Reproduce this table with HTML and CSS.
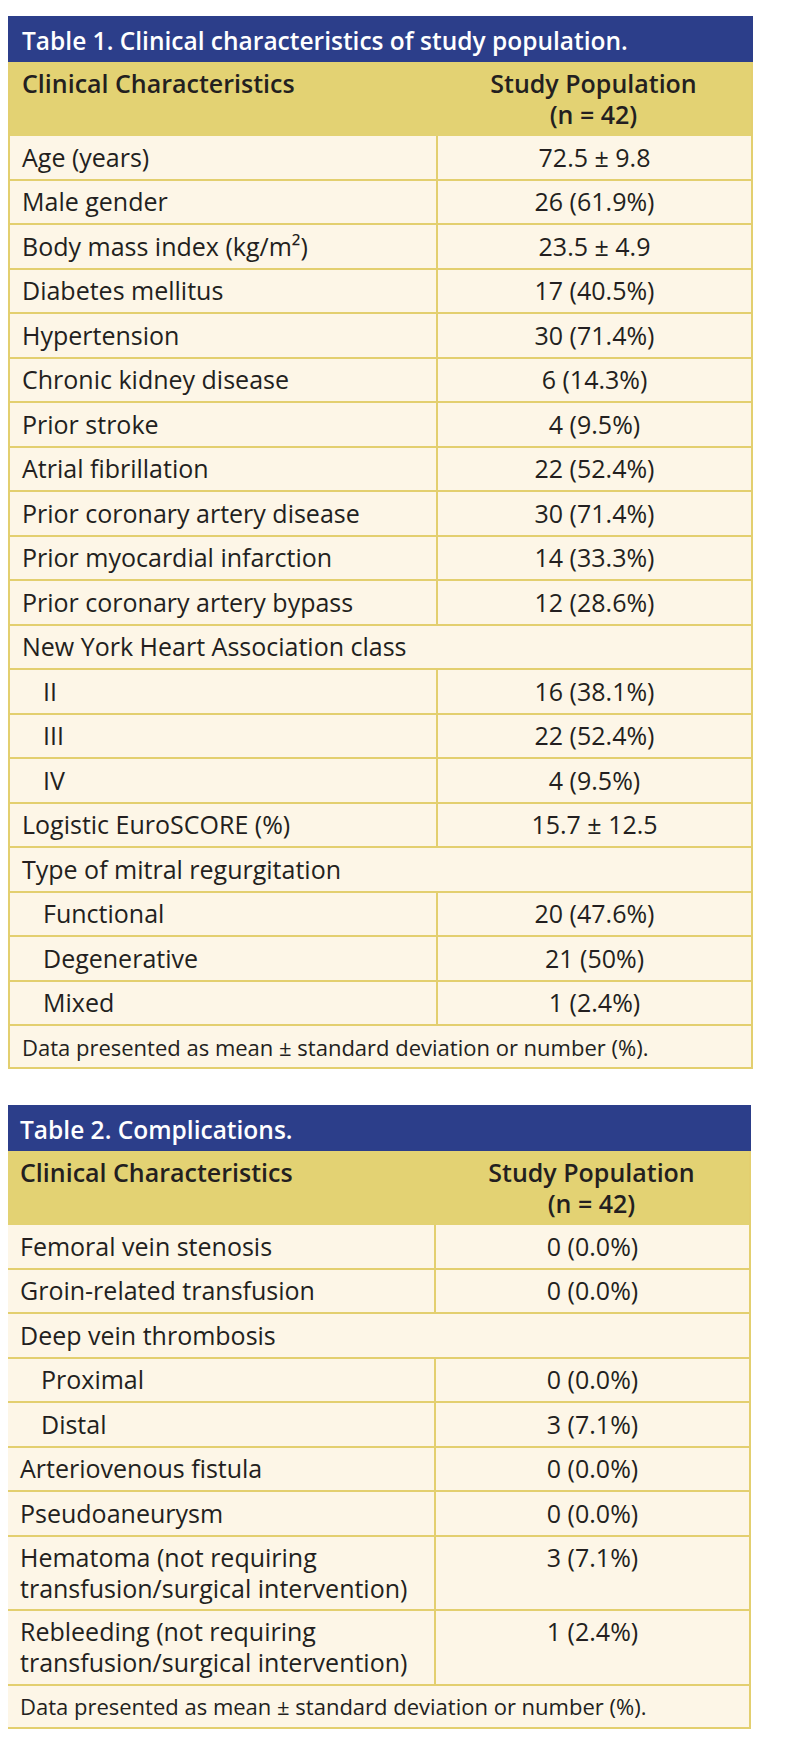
FILE: index.html
```html
<!DOCTYPE html>
<html lang="en">
<head>
<meta charset="utf-8">
<title>Tables</title>
<link rel="stylesheet" href="styles.css">
</head>
<body>
<section class="tbl t1">
  <div class="title">Table 1. Clinical characteristics of study population.</div>
  <div class="body">
    <div class="row head"><div class="c1">Clinical Characteristics</div><div class="c2">Study Population<br>(n = 42)</div></div>
    <div class="row"><div class="c1">Age (years)</div><div class="c2">72.5 ± 9.8</div></div>
    <div class="row"><div class="c1">Male gender</div><div class="c2">26 (61.9%)</div></div>
    <div class="row"><div class="c1">Body mass index (kg/m²)</div><div class="c2">23.5 ± 4.9</div></div>
    <div class="row"><div class="c1">Diabetes mellitus</div><div class="c2">17 (40.5%)</div></div>
    <div class="row"><div class="c1">Hypertension</div><div class="c2">30 (71.4%)</div></div>
    <div class="row"><div class="c1">Chronic kidney disease</div><div class="c2">6 (14.3%)</div></div>
    <div class="row"><div class="c1">Prior stroke</div><div class="c2">4 (9.5%)</div></div>
    <div class="row"><div class="c1">Atrial fibrillation</div><div class="c2">22 (52.4%)</div></div>
    <div class="row"><div class="c1">Prior coronary artery disease</div><div class="c2">30 (71.4%)</div></div>
    <div class="row"><div class="c1">Prior myocardial infarction</div><div class="c2">14 (33.3%)</div></div>
    <div class="row"><div class="c1">Prior coronary artery bypass</div><div class="c2">12 (28.6%)</div></div>
    <div class="row span"><div class="c1">New York Heart Association class</div></div>
    <div class="row"><div class="c1 ind">II</div><div class="c2">16 (38.1%)</div></div>
    <div class="row"><div class="c1 ind">III</div><div class="c2">22 (52.4%)</div></div>
    <div class="row"><div class="c1 ind">IV</div><div class="c2">4 (9.5%)</div></div>
    <div class="row"><div class="c1">Logistic EuroSCORE (%)</div><div class="c2">15.7 ± 12.5</div></div>
    <div class="row span"><div class="c1">Type of mitral regurgitation</div></div>
    <div class="row"><div class="c1 ind">Functional</div><div class="c2">20 (47.6%)</div></div>
    <div class="row"><div class="c1 ind">Degenerative</div><div class="c2">21 (50%)</div></div>
    <div class="row"><div class="c1 ind">Mixed</div><div class="c2">1 (2.4%)</div></div>
    <div class="note">Data presented as mean ± standard deviation or number (%).</div>
  </div>
</section>

<section class="tbl t2">
  <div class="title">Table 2. Complications.</div>
  <div class="body">
    <div class="row head"><div class="c1">Clinical Characteristics</div><div class="c2">Study Population<br>(n = 42)</div></div>
    <div class="row"><div class="c1">Femoral vein stenosis</div><div class="c2">0 (0.0%)</div></div>
    <div class="row"><div class="c1">Groin-related transfusion</div><div class="c2">0 (0.0%)</div></div>
    <div class="row span"><div class="c1">Deep vein thrombosis</div></div>
    <div class="row"><div class="c1 ind">Proximal</div><div class="c2">0 (0.0%)</div></div>
    <div class="row"><div class="c1 ind">Distal</div><div class="c2">3 (7.1%)</div></div>
    <div class="row"><div class="c1">Arteriovenous fistula</div><div class="c2">0 (0.0%)</div></div>
    <div class="row"><div class="c1">Pseudoaneurysm</div><div class="c2">0 (0.0%)</div></div>
    <div class="row tall"><div class="c1">Hematoma (not requiring<br>transfusion/surgical intervention)</div><div class="c2">3 (7.1%)</div></div>
    <div class="row tall"><div class="c1">Rebleeding (not requiring<br>transfusion/surgical intervention)</div><div class="c2">1 (2.4%)</div></div>
    <div class="note">Data presented as mean ± standard deviation or number (%).</div>
  </div>
</section>
</body>
</html>
```

FILE: styles.css
```css
* { box-sizing: border-box; }

body {
  margin: 8px;
  background: #ffffff;
  font-family: "Open Sans", "Lato", sans-serif;
  color: #231f20;
}

.tbl {
  width: 745px;
}

.t1 {
  margin-top: 8px;
}

.t2 {
  margin-top: 36px;
  margin-left: -2px;
}

.title {
  background: #2c3e8a;
  color: #ffffff;
  font-size: 24.5px;
  font-weight: 600;
  height: 46px;
  padding: 2px 14px 0;
  display: flex;
  align-items: center;
  white-space: nowrap;
}

.body {
  background: #fdf6e7;
  border-left: 2px solid #e3cf6f;
  border-right: 2px solid #e3cf6f;
}

.row {
  display: grid;
  grid-template-columns: 426px 1fr;
  height: 44.5px;
  border-bottom: 2px solid #e3cf6f;
  font-size: 25px;
  line-height: 31px;
}

.row .c1 {
  padding-left: 12px;
  align-self: center;
  white-space: nowrap;
}

.row .c1.ind {
  padding-left: 33px;
}

.row .c2 {
  border-left: 2px solid #e3cf6f;
  text-align: center;
  display: flex;
  align-items: center;
  justify-content: center;
}

.row.span {
  grid-template-columns: 1fr;
}

.row.head {
  background: #e3d273;
  height: 74px;
  font-weight: 600;
  border-bottom-color: #e3d273;
}

.row.head .c1 {
  align-self: start;
  padding-top: 6px;
}

.row.head .c2 {
  border-left: none;
  align-items: flex-start;
  padding-top: 6px;
}

.row.tall {
  height: 74.5px;
}

.row.tall .c1 {
  align-self: start;
  padding-top: 5px;
}

.row.tall .c2 {
  align-items: flex-start;
  padding-top: 5px;
}

.note {
  height: 43px;
  border-bottom: 2px solid #e3cf6f;
  padding-left: 12px;
  font-size: 22px;
  display: flex;
  align-items: center;
  white-space: nowrap;
}
```
